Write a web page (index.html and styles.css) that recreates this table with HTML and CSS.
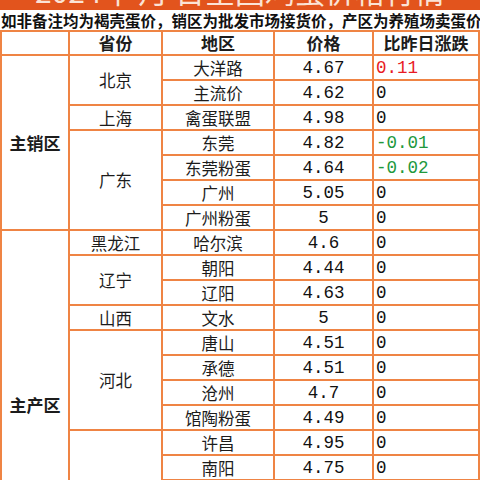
FILE: index.html
```html
<!DOCTYPE html>
<html lang="zh">
<head>
<meta charset="utf-8">
<title>鸡蛋价格</title>
<link rel="stylesheet" href="styles.css">
</head>
<body>
<div class="banner"><div class="banner-text">2024年 月 日全国鸡蛋价格行情</div></div>
<div class="note">如非备注均为褐壳蛋价，销区为批发市场接货价，产区为养殖场卖蛋价</div>
<table class="prices">
  <colgroup>
    <col class="c1"><col class="c2"><col class="c3"><col class="c4"><col class="c5">
  </colgroup>
  <thead>
    <tr><th></th><th>省份</th><th>地区</th><th>价格</th><th>比昨日涨跌</th></tr>
  </thead>
  <tbody>
    <tr><td class="zone" rowspan="7">主销区</td><td rowspan="2">北京</td><td>大洋路</td><td class="num">4.67</td><td class="chg up">0.11</td></tr>
    <tr><td>主流价</td><td class="num">4.62</td><td class="chg">0</td></tr>
    <tr><td>上海</td><td>禽蛋联盟</td><td class="num">4.98</td><td class="chg">0</td></tr>
    <tr><td rowspan="4">广东</td><td>东莞</td><td class="num">4.82</td><td class="chg down">-0.01</td></tr>
    <tr><td>东莞粉蛋</td><td class="num">4.64</td><td class="chg down">-0.02</td></tr>
    <tr><td>广州</td><td class="num">5.05</td><td class="chg">0</td></tr>
    <tr><td>广州粉蛋</td><td class="num">5</td><td class="chg">0</td></tr>
    <tr><td class="zone" rowspan="14">主产区</td><td>黑龙江</td><td>哈尔滨</td><td class="num">4.6</td><td class="chg">0</td></tr>
    <tr><td rowspan="2">辽宁</td><td>朝阳</td><td class="num">4.44</td><td class="chg">0</td></tr>
    <tr><td>辽阳</td><td class="num">4.63</td><td class="chg">0</td></tr>
    <tr><td>山西</td><td>文水</td><td class="num">5</td><td class="chg">0</td></tr>
    <tr><td rowspan="4">河北</td><td>唐山</td><td class="num">4.51</td><td class="chg">0</td></tr>
    <tr><td>承德</td><td class="num">4.51</td><td class="chg">0</td></tr>
    <tr><td>沧州</td><td class="num">4.7</td><td class="chg">0</td></tr>
    <tr><td>馆陶粉蛋</td><td class="num">4.49</td><td class="chg">0</td></tr>
    <tr><td rowspan="6">河南</td><td>许昌</td><td class="num">4.95</td><td class="chg">0</td></tr>
    <tr><td>南阳</td><td class="num">4.75</td><td class="chg">0</td></tr>
    <tr><td>驻马店</td><td class="num">4.7</td><td class="chg">0</td></tr>
    <tr><td>郑州</td><td class="num">4.8</td><td class="chg">0</td></tr>
    <tr><td>商丘</td><td class="num">4.7</td><td class="chg">0</td></tr>
    <tr><td>周口</td><td class="num">4.7</td><td class="chg">0</td></tr>
  </tbody>
</table>
</body>
</html>
```
FILE: styles.css
```css
html, body {
  margin: 0;
  padding: 0;
  background: #ffffff;
}
body {
  width: 480px;
  height: 480px;
  overflow: hidden;
  font-family: "Noto Sans CJK SC", "Noto Sans", sans-serif;
  color: #1c1c1c;
}
.banner {
  height: 10px;
  background: #e2541d;
  overflow: hidden;
  position: relative;
}
.banner-text {
  color: #fbe3d6;
  font-size: 30px;
  font-weight: 400;
  line-height: 30px;
  margin-top: -25px;
  text-align: center;
  white-space: nowrap;
}
.note {
  height: 20px;
  line-height: 20px;
  font-size: 15.5px;
  font-weight: 700;
  white-space: nowrap;
  overflow: hidden;
  padding-left: 1px;
  color: #111111;
  background: #ffffff;
  position: relative;
}
.prices {
  border-collapse: collapse;
  table-layout: fixed;
  width: 478px;
}
.c1 { width: 68px; }
.c2 { width: 93px; }
.c3 { width: 112px; }
.c4 { width: 99px; }
.c5 { width: 106px; }
.prices th,
.prices td {
  border: 2px solid #ef8444;
  height: 23px;
  padding: 0;
  text-align: center;
  vertical-align: middle;
  font-size: 16.5px;
  line-height: 20px;
  font-weight: 400;
  white-space: nowrap;
}
.prices th {
  font-size: 17px;
  font-weight: 700;
  height: 22px;
}
.prices td.zone {
  font-weight: 700;
  font-size: 17px;
}
.prices td.num,
.prices td.chg {
  font-family: "Liberation Mono", "DejaVu Sans Mono", monospace;
  font-size: 17.5px;
  color: #111111;
}
.prices td.chg {
  text-align: left;
  padding-left: 2px;
}
.prices td.up { color: #e81a24; }
.prices td.down { color: #21983c; }
```
